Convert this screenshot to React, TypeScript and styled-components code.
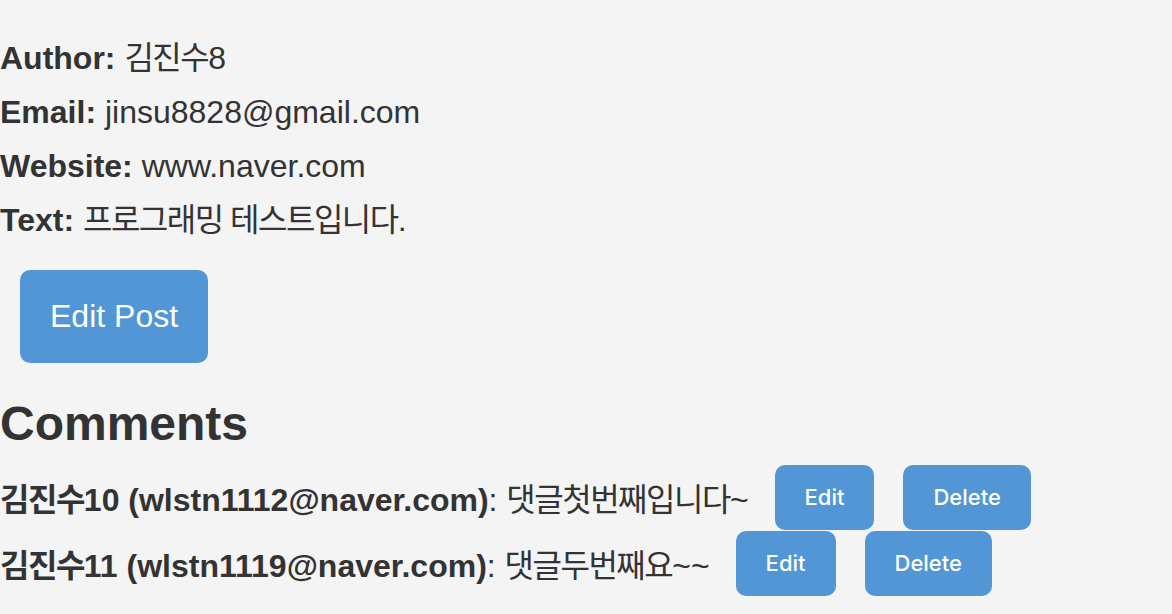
import React from "react";
import styled, { createGlobalStyle } from "styled-components";

const GlobalStyle = createGlobalStyle`
  html, body {
    margin: 0;
    padding: 0;
    background: #f4f4f4;
  }
  body {
    font-family: "Liberation Sans", "Noto Sans CJK KR", sans-serif;
    color: #333333;
  }
`;

const Page = styled.div`
  padding-top: 31px;
  min-height: 614px;
  box-sizing: border-box;
`;

const InfoList = styled.div`
  display: flex;
  flex-direction: column;
`;

const InfoLine = styled.div`
  font-size: 32px;
  line-height: 54px;
  white-space: nowrap;
`;

const Label = styled.strong`
  font-weight: 700;
`;

// korean glyphs are a bit narrower in the original font
const Ko = styled.span`
  letter-spacing: -1.5px;
`;

const BigButton = styled.button`
  display: block;
  margin: 23px 0 0 20px;
  height: 93px;
  padding: 0 30px;
  border: none;
  border-radius: 10px;
  background: #5296d6;
  color: #ffffff;
  font-family: "Liberation Sans", sans-serif;
  font-size: 32px;
  cursor: pointer;
`;

const Heading = styled.h2`
  margin: 33px 0 13px;
  font-size: 48px;
  line-height: 55px;
  font-weight: 700;
`;

const CommentList = styled.div`
  display: flex;
  flex-direction: column;
`;

const CommentRow = styled.div`
  display: flex;
  align-items: center;
  height: 66px;
  font-size: 32px;
  white-space: nowrap;
`;

const CommentText = styled.span`
  margin-right: 26px;
`;

const SmallButton = styled.button`
  height: 65px;
  padding: 0 30px;
  margin-right: 29px;
  border: none;
  border-radius: 10px;
  background: #5296d6;
  color: #ffffff;
  font-family: "Inter", sans-serif;
  font-size: 22px;
  font-weight: 500;
  cursor: pointer;
`;

type Comment = {
  name: string;
  num: string;
  email: string;
  body: string;
  tail: string;
};

const comments: Comment[] = [
  { name: "김진수", num: "10", email: "wlstn1112@naver.com", body: "댓글첫번째입니다", tail: "~" },
  { name: "김진수", num: "11", email: "wlstn1119@naver.com", body: "댓글두번째요", tail: "~~" },
];

export default function App() {
  return (
    <>
      <GlobalStyle />
      <Page>
        <InfoList>
          <InfoLine>
            <Label>Author:</Label> <Ko>김진수</Ko>8
          </InfoLine>
          <InfoLine>
            <Label>Email:</Label> jinsu8828@gmail.com
          </InfoLine>
          <InfoLine>
            <Label>Website:</Label> www.naver.com
          </InfoLine>
          <InfoLine>
            <Label>Text:</Label> <Ko>프로그래밍 테스트입니다</Ko>.
          </InfoLine>
        </InfoList>
        <BigButton>Edit Post</BigButton>
        <Heading>Comments</Heading>
        <CommentList>
          {comments.map((c) => (
            <CommentRow key={c.email}>
              <CommentText>
                <Label>
                  <Ko>{c.name}</Ko>
                  {c.num} ({c.email})
                </Label>
                : <Ko>{c.body}</Ko>
                {c.tail}
              </CommentText>
              <SmallButton>Edit</SmallButton>
              <SmallButton>Delete</SmallButton>
            </CommentRow>
          ))}
        </CommentList>
      </Page>
    </>
  );
}
